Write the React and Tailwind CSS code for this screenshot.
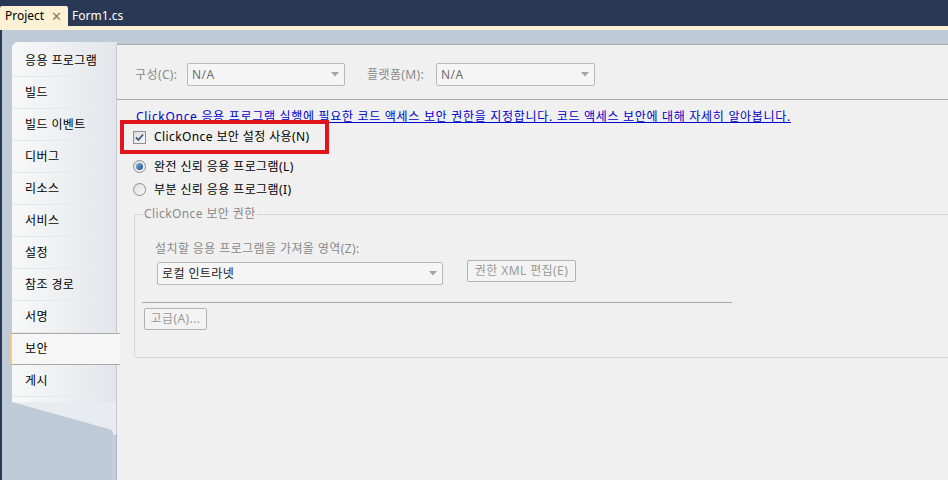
import React from 'react'

const navItems = ["응용 프로그램", "빌드", "빌드 이벤트", "디버그", "리소스", "서비스", "설정", "참조 경로", "서명", "보안", "게시"];

const Arrow = () => (
  <svg width="8" height="5" viewBox="0 0 8 5" className="shrink-0">
    <path d="M0 0 H8 L4 4.5 Z" fill="#a3a3a3" />
  </svg>
);

const Select = ({ value, className, textClass }) => (
  <div className={`h-[23px] flex items-center justify-between pl-[4px] pr-[5px] border border-[#b9b9b9] rounded-[2px] bg-[#f5f5f5] ${className}`}>
    <span className={textClass}>{value}</span>
    <Arrow />
  </div>
);

const Button = ({ children, className }) => (
  <div className={`h-[22px] flex items-center justify-center border border-[#b2b2b2] rounded-[2px] bg-[#f3f3f3] text-[#9a9a9a] ${className}`}>
    {children}
  </div>
);

const Checkbox = () => (
  <div className="w-[13px] h-[13px] border border-[#8e8f8f] bg-gradient-to-br from-[#dcdcdc] to-[#f8f8f8] flex items-center justify-center">
    <svg width="9" height="9" viewBox="0 0 9 9">
      <path d="M1 4.5 L3.5 7 L8 1.5" fill="none" stroke="#3d5a8a" strokeWidth="1.8" />
    </svg>
  </div>
);

const Radio = ({ checked }) => (
  <div className="w-[13px] h-[13px] rounded-full border border-[#8e8f8f] bg-gradient-to-br from-[#dcdcdc] to-[#fafafa] flex items-center justify-center">
    {checked && <div className="w-[7px] h-[7px] rounded-full bg-gradient-to-br from-[#7fb4e8] to-[#1b4f86]" />}
  </div>
);

export default function App() {
  return (
    <div className="w-[948px] h-[480px] overflow-hidden flex flex-col text-[12px] leading-[14px] tracking-[0.4px] text-black font-[family-name:'Noto_Sans','Noto_Sans_CJK_KR',sans-serif]">
      {/* document tabs */}
      <div className="h-[26px] bg-[#293955] flex items-end">
        <div className="h-[20px] w-[68px] rounded-t-[2px] bg-[#fcf1d4] flex items-center pl-[5px] gap-[7px] tracking-normal">
          <span>Project</span>
          <span className="text-[#8c7a58] text-[13px]">✕</span>
        </div>
        <div className="h-[20px] flex items-center pl-[4px] text-white tracking-normal">Form1.cs</div>
      </div>
      <div className="h-[4px] bg-[#fcf1d4]" />

      <div className="flex flex-1 min-h-0 bg-[#bfcad8] border-l-2 border-[#293955]">
        {/* left nav */}
        <div className="w-[115px] shrink-0 flex flex-col pt-[12px] pl-[10px]">
          <div className="rounded-tl-[6px] bg-gradient-to-r from-[#f8f8f8] to-[#e2e6eb] pt-[3px] flex flex-col">
            {navItems.map((item) =>
              item === "보안" ? (
                <div key={item} className="relative z-10 -ml-[2px] w-[110px] h-[32px] flex items-center pl-[13px] bg-[#f6f6f6] border-y border-[#a9a9a9] border-l-2 border-l-[#f3c983]">
                  {item}
                </div>
              ) : (
                <div key={item} className="h-[32px] flex items-center pl-[13px] border-b border-[#e6e7e9] border-r border-r-[#c3c9d1]">
                  {item}
                </div>
              )
            )}
            <div className="h-[5px] border-r border-[#c3c9d1]" />
          </div>
          <svg width="105" height="33" viewBox="0 0 105 33" className="block">
            <path d="M0 0 H105 V33 H101 V31 Q101 28 97 27 L0 0 Z" fill="#e8ebef" />
            <path d="M104.5 0 V33" stroke="#c3c9d1" />
          </svg>
          <div className="flex-1 border-r border-[#aab3bf] bg-[#c4cfdc] ml-[100px]" />
        </div>

        {/* content */}
        <div className="flex-1 mt-[14px] bg-[#f0f0f0] border-t border-[#a9a9a9] flex flex-col">
          <div className="h-[55px] border-b border-[#a9a9a9] flex items-start pt-[18px] pl-[18px] text-[#8a8a8a]">
            <div className="h-[23px] w-[52px] flex items-center">구성(C):</div>
            <Select value="N/A" className="w-[158px]" textClass="text-[#6f6f6f]" />
            <div className="h-[23px] w-[69px] ml-[22px] flex items-center">플랫폼(M):</div>
            <Select value="N/A" className="w-[159px]" textClass="text-[#6f6f6f]" />
          </div>

          <div className="mt-[10px] ml-[19px] text-[#0000cc] underline whitespace-nowrap tracking-[0.7px]">
            ClickOnce 응용 프로그램 실행에 필요한 코드 액세스 보안 권한을 지정합니다. 코드 액세스 보안에 대해 자세히 알아봅니다.
          </div>

          <div className="-mt-[4px] ml-[3px] w-[209px] h-[34px] border-4 border-[#e2141c] flex items-center pl-[9px] gap-[8px]">
            <Checkbox />
            <span>ClickOnce 보안 설정 사용(N)</span>
          </div>

          <div className="mt-[1px] h-[23px] flex items-center pl-[16px] gap-[8px]">
            <Radio checked />
            <span>완전 신뢰 응용 프로그램(L)</span>
          </div>
          <div className="h-[23px] flex items-center pl-[16px] gap-[8px]">
            <Radio />
            <span>부분 신뢰 응용 프로그램(I)</span>
          </div>

          <fieldset className="mt-[5px] ml-[17px] w-[830px] border border-[#d6d6d6] rounded-[3px] pb-[27px]">
            <legend className="ml-[8px] px-[1px] leading-[16px] text-[#8a8a8a]">ClickOnce 보안 권한</legend>
            <div className="mt-[20px] ml-[20px] text-[#8a8a8a]">설치할 응용 프로그램을 가져올 영역(Z):</div>
            <div className="mt-[4px] flex items-start">
              <Select value="로컬 인트라넷" className="ml-[22px] mt-[2px] w-[286px]" textClass="text-[#222]" />
              <Button className="ml-[24px] w-[109px]">권한 XML 편집(E)</Button>
            </div>
            <div className="mt-[17px] ml-[7px] w-[590px] border-t border-[#a9a9a9]" />
            <Button className="mt-[5px] ml-[9px] w-[63px]">고급(A)...</Button>
          </fieldset>
        </div>
      </div>
    </div>
  );
}
